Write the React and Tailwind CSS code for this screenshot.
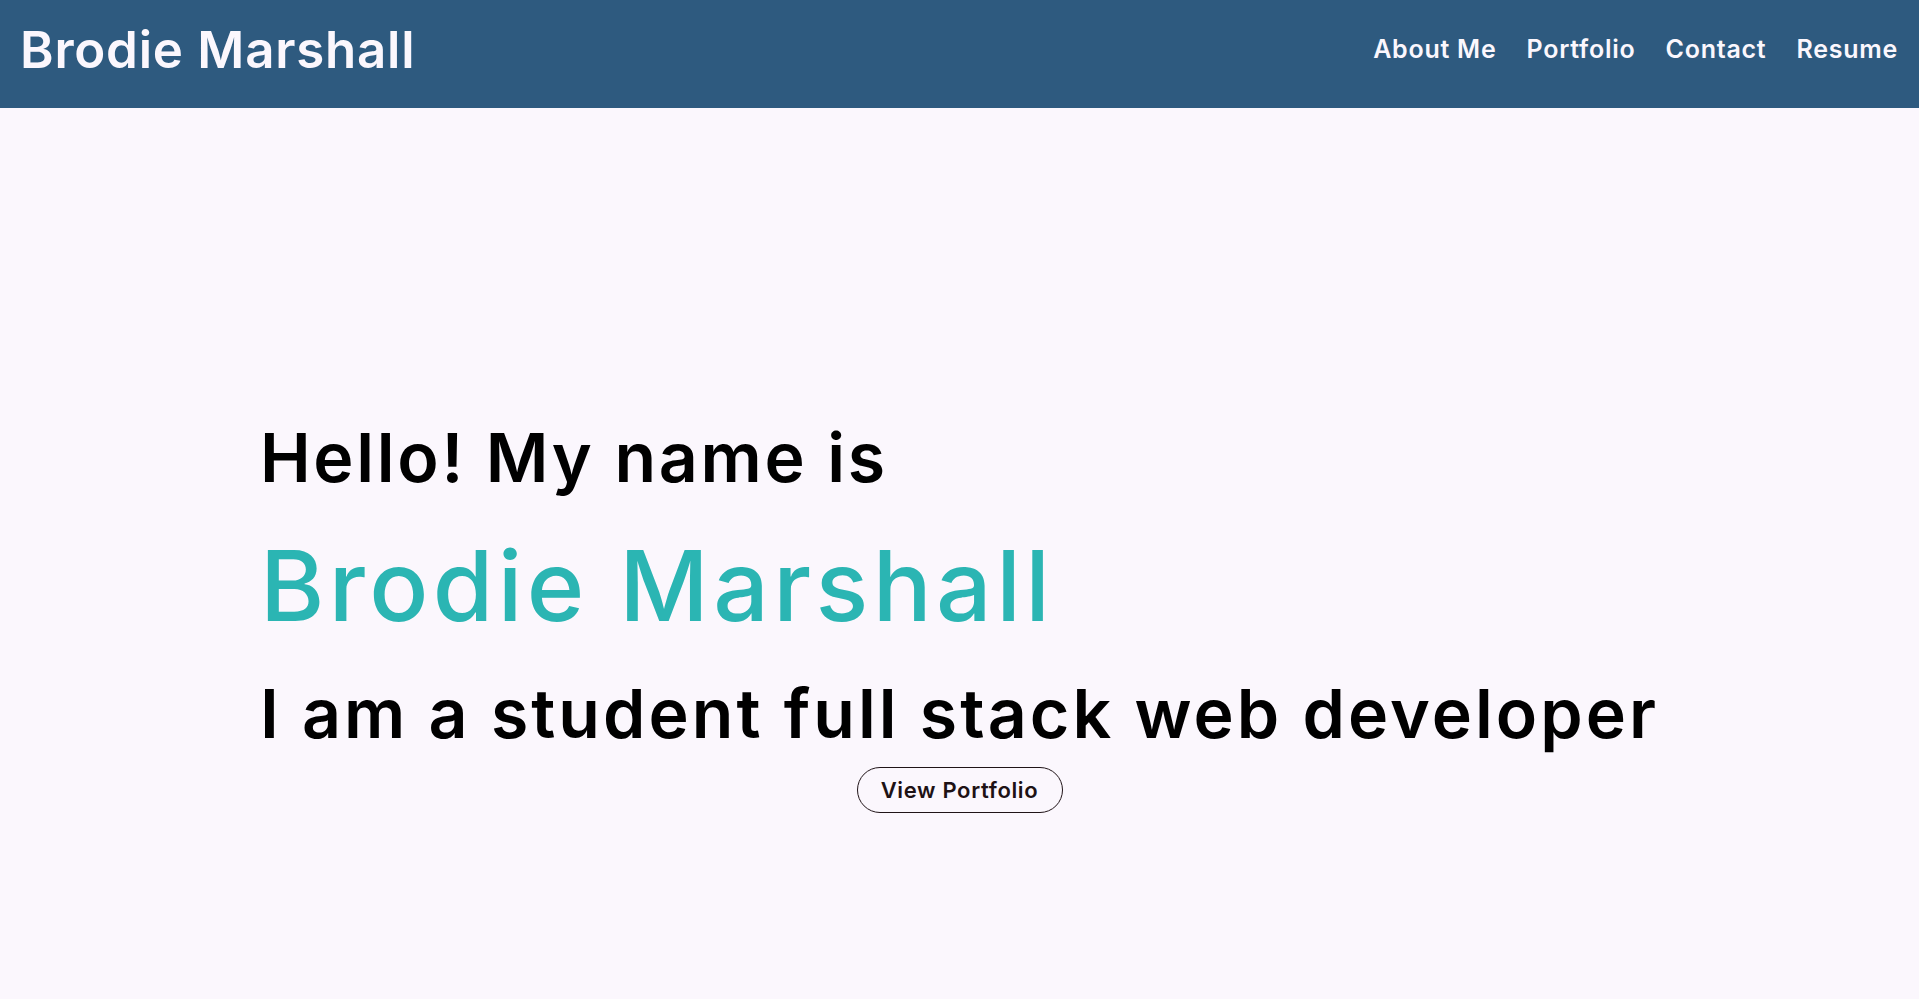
import React from 'react';

const links = ['About Me', 'Portfolio', 'Contact', 'Resume'];

const App = () => {
  return (
    <div className="min-h-screen bg-[#fbf7fd] font-['Inter','Noto_Sans',sans-serif]">
      <header className="flex h-[108px] items-center justify-between bg-[#2e5a7f] pb-[9px] pl-5 pr-[21px] text-[#fbf7fd]">
        <h1 className="text-[51px] font-semibold leading-none tracking-[0.015em]">Brodie Marshall</h1>
        <nav className="flex items-center gap-[30px]">
          {links.map((link) => (
            <a key={link} href="#" className="text-[25px] font-semibold leading-none tracking-[0.03em]">
              {link}
            </a>
          ))}
        </nav>
      </header>

      {/* Hero */}
      <main className="flex min-h-screen flex-col items-center justify-center pt-[15px]">
        <div className="text-left">
          <h2 className="text-[68px] font-semibold leading-[80px] tracking-[0.04em] text-black">Hello! My name is</h2>
          <h1 className="mt-[34px] text-[98px] font-medium leading-[110px] tracking-[0.045em] text-[#2bb5b3]">
            Brodie Marshall
          </h1>
          <h2 className="mt-[32px] text-[68px] font-semibold leading-[80px] tracking-[0.045em] text-black">
            I am a student full stack web developer
          </h2>
        </div>
        <button className="mt-[14px] h-[46px] w-[206px] rounded-full border border-[#201418] text-[22px] font-semibold tracking-[0.03em] text-[#1e1215]">
          View Portfolio
        </button>
      </main>
    </div>
  );
};

export default App;
